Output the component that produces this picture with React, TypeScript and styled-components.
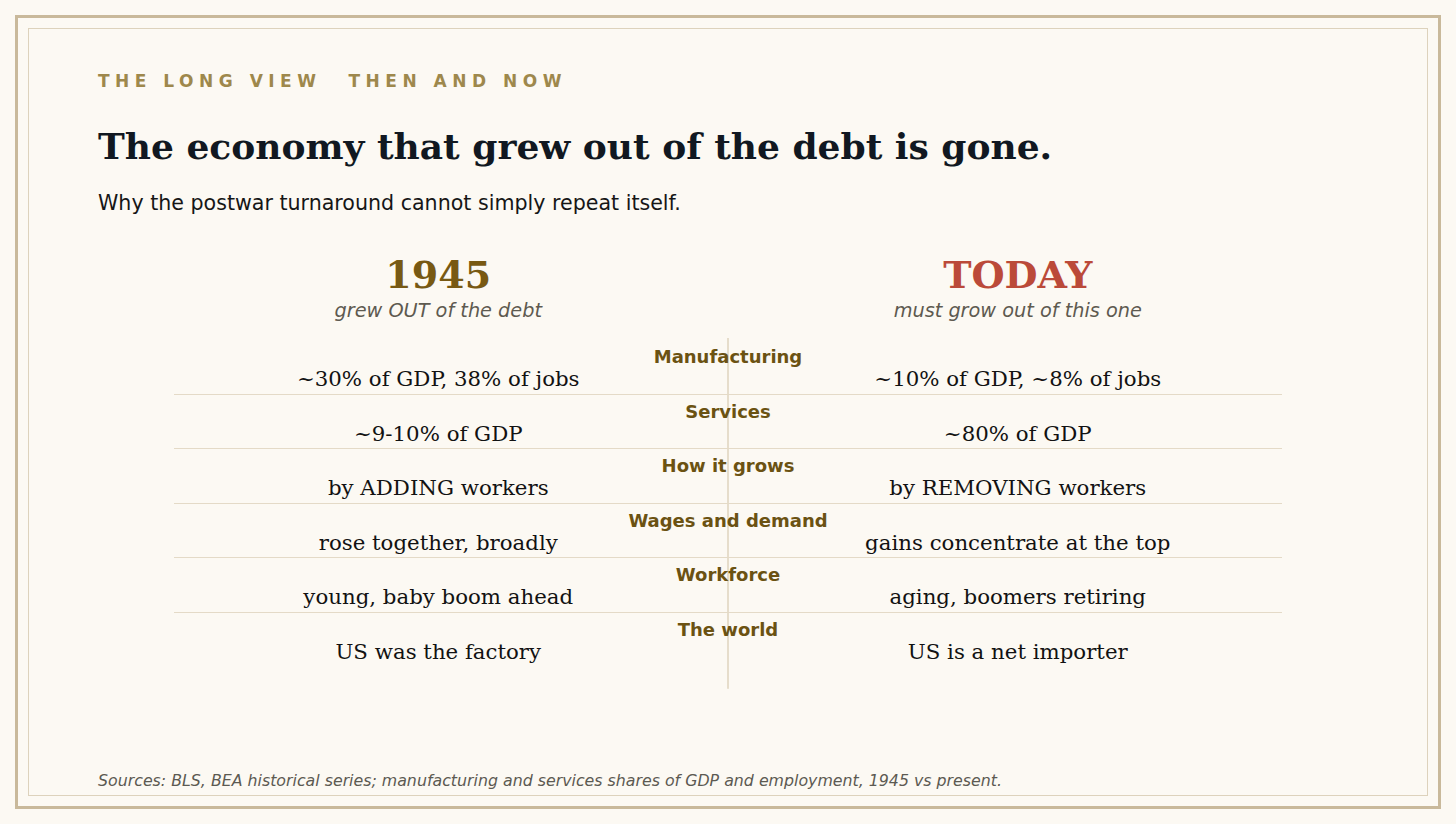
import React from 'react';
import styled, { createGlobalStyle } from 'styled-components';

const SERIF = `"DejaVu Serif", "Liberation Serif", serif`;
const SANS = `"DejaVu Sans", "Liberation Sans", sans-serif`;

const GlobalStyle = createGlobalStyle`
  html, body {
    margin: 0;
    padding: 0;
    background: #fcf9f3;
  }
  * { box-sizing: border-box; }
`;

const Frame = styled.div`
  margin: 15px;
  height: 794px;
  border: 3px solid #c9b99b;
  padding: 10px;
`;

const Inner = styled.div`
  height: 100%;
  border: 1px solid #ddd2bc;
  padding: 42px 69px 4px;
  display: flex;
  flex-direction: column;
`;

const Kicker = styled.div`
  display: flex;
  gap: 27px;
  font-family: ${SANS};
  font-weight: 700;
  font-size: 17px;
  line-height: 20px;
  letter-spacing: 5.5px;
  color: #9e884c;
`;

const Headline = styled.h1`
  margin: 33px 0 0;
  font-family: ${SERIF};
  font-weight: 700;
  font-size: 36px;
  line-height: 44px;
  color: #111821;
`;

const Dek = styled.p`
  margin: 22px 0 0;
  font-family: ${SANS};
  font-size: 20.6px;
  line-height: 26px;
  color: #161616;
`;

const Compare = styled.section`
  margin: 37px 76px 0;
`;

const Columns = styled.div`
  display: grid;
  grid-template-columns: 1fr 1fr;
  column-gap: 51px;
`;

const ColHead = styled.div`
  text-align: center;
`;

const Era = styled.div<{ $tone: 'then' | 'now' }>`
  font-family: ${SERIF};
  font-weight: 700;
  font-size: 38px;
  line-height: 44px;
  color: ${(p) => (p.$tone === 'then' ? '#785913' : '#bb4a39')};
`;

const EraNote = styled.div`
  margin-top: 2px;
  font-family: ${SANS};
  font-style: italic;
  font-size: 19.3px;
  line-height: 24px;
  color: #5e5a50;
`;

// centre rule drawn as a background stripe so rows stay in normal flow
const Table = styled.div`
  margin-top: 15px;
  padding: 2px 0 21px;
  background: linear-gradient(#e6ddcb, #e6ddcb) center / 2px 100% no-repeat;
`;

const Row = styled.div<{ $last?: boolean }>`
  padding: 8px 0 1.6px;
  border-bottom: 1px solid ${(p) => (p.$last ? 'transparent' : '#e4dac7')};
`;

const Label = styled.div`
  text-align: center;
  font-family: ${SANS};
  font-weight: 700;
  font-size: 18px;
  line-height: 18px;
  color: #6b5212;
`;

const Value = styled.div`
  text-align: center;
  font-family: ${SERIF};
  font-size: 21.3px;
  line-height: 26px;
  color: #121212;
`;

const Sources = styled.footer`
  margin-top: auto;
  font-family: ${SANS};
  font-style: italic;
  font-size: 15.8px;
  line-height: 20px;
  color: #5c5a52;
`;

const rows = [
  { label: 'Manufacturing', then: '~30% of GDP, 38% of jobs', now: '~10% of GDP, ~8% of jobs' },
  { label: 'Services', then: '~9-10% of GDP', now: '~80% of GDP' },
  { label: 'How it grows', then: 'by ADDING workers', now: 'by REMOVING workers' },
  { label: 'Wages and demand', then: 'rose together, broadly', now: 'gains concentrate at the top' },
  { label: 'Workforce', then: 'young, baby boom ahead', now: 'aging, boomers retiring' },
  { label: 'The world', then: 'US was the factory', now: 'US is a net importer' },
];

export default function App() {
  return (
    <>
      <GlobalStyle />
      <Frame>
        <Inner>
          <Kicker>
            <span>THE LONG VIEW</span>
            <span>THEN AND NOW</span>
          </Kicker>
          <Headline>The economy that grew out of the debt is gone.</Headline>
          <Dek>Why the postwar turnaround cannot simply repeat itself.</Dek>

          <Compare>
            <Columns>
              <ColHead>
                <Era $tone="then">1945</Era>
                <EraNote>grew OUT of the debt</EraNote>
              </ColHead>
              <ColHead>
                <Era $tone="now">TODAY</Era>
                <EraNote>must grow out of this one</EraNote>
              </ColHead>
            </Columns>

            <Table>
              {rows.map((r, i) => (
                <Row key={r.label} $last={i === rows.length - 1}>
                  <Label>{r.label}</Label>
                  <Columns>
                    <Value>{r.then}</Value>
                    <Value>{r.now}</Value>
                  </Columns>
                </Row>
              ))}
            </Table>
          </Compare>

          <Sources>
            Sources: BLS, BEA historical series; manufacturing and services shares of GDP and employment, 1945 vs present.
          </Sources>
        </Inner>
      </Frame>
    </>
  );
}
